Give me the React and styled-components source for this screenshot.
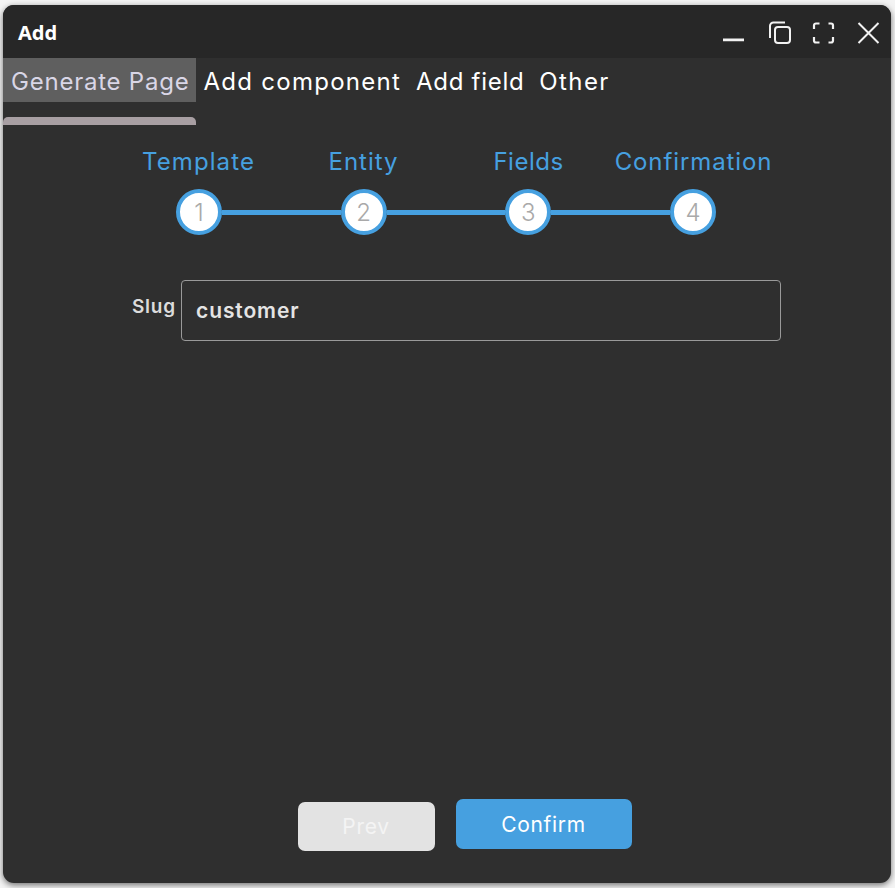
import React from 'react';
import styled, { createGlobalStyle } from 'styled-components';

const FONT = '"Inter", "Noto Sans", sans-serif';
const BLUE = '#46a0e0';
// Inter runs narrower than the reference face, so every label carries its own tracking
const STEPS = [
  { label: 'Template', tracking: 1.1 },
  { label: 'Entity', tracking: 1 },
  { label: 'Fields', tracking: 0.5 },
  { label: 'Confirmation', tracking: 0.9 },
];
const TABS = [
  { label: 'Generate Page', tracking: 0.77 },
  { label: 'Add component', tracking: 1.27 },
  { label: 'Add field', tracking: 0.7 },
  { label: 'Other', tracking: 1.4 },
];

const GlobalStyle = createGlobalStyle`
  html, body {
    margin: 0;
    padding: 0;
    background: #f4f4f4;
  }
`;

const Page = styled.div`
  width: 895px;
  height: 888px;
  padding: 5px 4px 5px 3px;
  box-sizing: border-box;
  overflow: hidden;
`;
const Window = styled.div`
  display: flex;
  flex-direction: column;
  height: 100%;
  border-radius: 11px;
  overflow: hidden;
  background: #2f2f2f;
  box-shadow: 0 2px 6px rgba(0, 0, 0, 0.55);
  font-family: ${FONT};
`;
const TitleBar = styled.div`
  display: flex;
  align-items: center;
  justify-content: space-between;
  height: 53px;
  padding: 0 11px 0 15px;
  background: #272727;
`;
const Title = styled.div`
  margin-top: 2px;
  font-family: "Noto Sans", sans-serif;
  font-size: 20px;
  font-weight: 700;
  color: #fff;
`;
const Controls = styled.div`
  display: flex;
  align-items: center;
  gap: 21px;
`;
const IconButton = styled.svg`
  display: block;
  width: 24px;
  height: 24px;
  overflow: visible;
  fill: none;
  stroke: #f2f2f2;
  stroke-width: 2;
`;
const Tabs = styled.div`
  display: flex;
  height: 44px;
`;
const Tab = styled.div`
  display: flex;
  align-items: center;
  padding: ${(p) => (p.$active ? '2px 7px 0 8px' : '2px 8px 0 7px')};
  font-size: 24px;
  letter-spacing: ${(p) => p.$tracking}px;
  white-space: nowrap;
  color: ${(p) => (p.$active ? '#d9d6e6' : '#fff')};
  background: ${(p) => (p.$active ? '#5f5f5f' : 'transparent')};
`;
const TabIndicator = styled.div`
  width: 193px;
  height: 8px;
  margin-top: 15px;
  border-radius: 5px 5px 0 0;
  background: #a89fa3;
`;
const Stepper = styled.div`
  display: flex;
  flex-direction: column;
  width: 660px;
  margin: 24px 0 0 113px;
`;
const StepLabels = styled.div`
  display: grid;
  grid-template-columns: repeat(4, 1fr);
`;
const StepLabel = styled.div`
  text-align: center;
  font-size: 24px;
  line-height: 26px;
  letter-spacing: ${(p) => p.$tracking}px;
  white-space: nowrap;
  color: ${BLUE};
`;
const StepTrack = styled.div`
  display: flex;
  align-items: center;
  padding: 0 60px;
  margin-top: 14px;
`;
const StepCircle = styled.div`
  display: flex;
  align-items: center;
  justify-content: center;
  flex: none;
  width: 46px;
  height: 46px;
  box-sizing: border-box;
  border: 4px solid ${BLUE};
  border-radius: 50%;
  background: #fff;
  color: #a9a9a9;
  font-size: 24px;
  font-weight: 300;
`;
const StepLine = styled.div`
  flex: 1;
  height: 5px;
  background: ${BLUE};
`;
const FieldRow = styled.div`
  display: flex;
  align-items: flex-start;
  justify-content: flex-end;
  gap: 5px;
  width: 648px;
  margin: 45px 0 0 130px;
`;
const FieldLabel = styled.label`
  margin-top: 16px;
  font-size: 19px;
  line-height: 22px;
  letter-spacing: 0.8px;
  font-weight: 600;
  color: #dcdcdc;
`;
const SlugInput = styled.div`
  flex: none;
  width: 600px;
  height: 61px;
  box-sizing: border-box;
  padding-left: 14px;
  display: flex;
  align-items: center;
  border: 1px solid #9a9a9a;
  border-radius: 4px;
  font-size: 21px;
  font-weight: 600;
  letter-spacing: 0.9px;
  color: #e4e4e4;
`;
const Footer = styled.div`
  display: flex;
  align-items: flex-start;
  justify-content: center;
  gap: 21px;
  margin-top: auto;
  padding: 0 0 32px 35px;
`;
const Button = styled.div`
  display: flex;
  align-items: center;
  justify-content: center;
  height: ${(p) => (p.$primary ? '50px' : '49px')};
  width: ${(p) => (p.$primary ? '176px' : '137px')};
  margin-top: ${(p) => (p.$primary ? '0' : '3px')};
  border-radius: 7px;
  box-sizing: border-box;
  font-size: 21px;
  letter-spacing: 0.7px;
  color: ${(p) => (p.$primary ? '#fff' : '#f4f4f4')};
  background: ${(p) => (p.$primary ? BLUE : '#e3e3e3')};
`;

const App = () => (
  <Page>
    <GlobalStyle />
    <Window>
      <TitleBar>
        <Title>Add</Title>
        <Controls>
          <IconButton viewBox="0 0 24 24">
            <path d="M2 19.800h21" strokeWidth="2.800" />
          </IconButton>
          <IconButton viewBox="0 0 24 24">
            <path d="M4 18V6a3.500 3.500 0 0 1 3.500-3.500H19" />
            <rect x="9" y="7" width="15" height="16" rx="3" />
          </IconButton>
          <IconButton viewBox="0 0 24 24">
            <path d="M8.500 3.500H5a2 2 0 0 0-2 2V9M17.500 3.500H20a2 2 0 0 1 2 2V9M8.500 22.500H5a2 2 0 0 1-2-2V17M17.500 22.500H20a2 2 0 0 0 2-2V17" strokeWidth="2.200" />
          </IconButton>
          <IconButton viewBox="0 0 24 24">
            <path d="M2.500 3l20 20M22.500 3l-20 20" />
          </IconButton>
        </Controls>
      </TitleBar>
      <Tabs>
        {TABS.map((tab, i) => (
          <Tab key={tab.label} $active={i === 0} $tracking={tab.tracking}>{tab.label}</Tab>
        ))}
      </Tabs>
      <TabIndicator />
      <Stepper>
        <StepLabels>
          {STEPS.map((step) => (
            <StepLabel key={step.label} $tracking={step.tracking}>{step.label}</StepLabel>
          ))}
        </StepLabels>
        <StepTrack>
          {STEPS.map((step, i) => (
            <React.Fragment key={step.label}>
              {i > 0 && <StepLine />}
              <StepCircle>{i + 1}</StepCircle>
            </React.Fragment>
          ))}
        </StepTrack>
      </Stepper>
      <FieldRow>
        <FieldLabel>Slug</FieldLabel>
        <SlugInput>customer</SlugInput>
      </FieldRow>
      <Footer>
        <Button>Prev</Button>
        <Button $primary>Confirm</Button>
      </Footer>
    </Window>
  </Page>
);

export default App;
